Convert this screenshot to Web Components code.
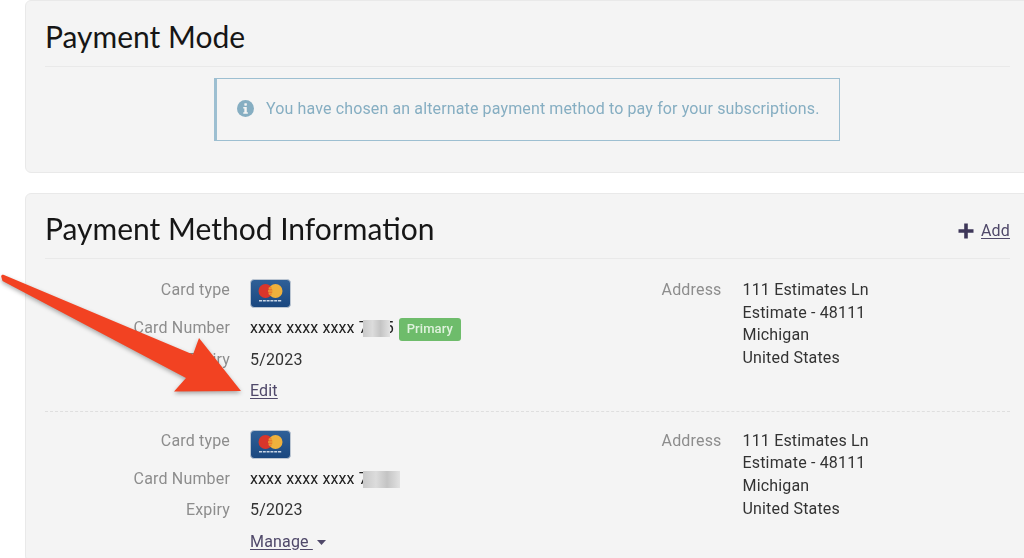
<!DOCTYPE html>
<html lang="en"><head><meta charset="utf-8"><title>Payment</title>
<style>
html,body{margin:0;height:558px;overflow:hidden;background:#fff}
body{font:16px/22.7px Roboto,"Liberation Sans",sans-serif;color:#333;letter-spacing:.17px}
#page{position:relative;width:1024px;height:558px;overflow:hidden;filter:blur(.35px)}
#stack{display:flex;flex-direction:column;gap:20px;width:1005px;margin-left:25px}
#p1{--pad-top:13px}
#p2{--pad-top:12px}
</style></head><body>
<template id="t-panel"><style>
:host{display:block;background:#f4f4f4;border:1px solid #e9e9e9;border-radius:6px;padding:var(--pad-top,13px) 19px 0 19px}
header{display:flex;justify-content:space-between;align-items:flex-start;height:52px;border-bottom:1px solid #e9e9e9}
h2{margin:0;font:400 30px/44px Lato,"Liberation Sans",sans-serif;color:#161616;letter-spacing:0}
</style><header><h2><slot name="title"></slot></h2><slot name="action"></slot></header><slot></slot></template>
<template id="t-alert"><style>
:host{display:flex;align-items:center;box-sizing:border-box;width:626px;height:63px;margin:11px 0 31px 169px;border:1px solid #9dbfd1;border-left-width:3px;padding:0 0 0 20px;gap:12px;color:#86aec2;letter-spacing:.13px;white-space:nowrap}
svg{width:17px;height:17px;flex:none;margin-top:-3px}
span{margin-top:-1px}
</style><svg viewBox="0 0 16 16" aria-hidden="true"><circle cx="8" cy="8" r="8" fill="#86aec2"/><rect x="6.9" y="3" width="2.4" height="2.3" rx=".5" fill="#f4f4f4"/><path d="M5.9 6.6h3.3v5h1v1.3H5.9v-1.3h1v-3.7h-1z" fill="#f4f4f4"/></svg><span><slot></slot></span></template>
<template id="t-link"><style>
:host{display:inline;color:#4f4869;text-decoration:underline;text-underline-offset:2px;cursor:pointer}
</style><slot></slot></template>
<template id="t-add"><style>
:host{display:flex;align-items:center;gap:7px;margin-top:14px}
svg{width:16px;height:16px;margin-top:-1px}
</style><svg viewBox="0 0 16 16" aria-hidden="true"><path d="M6.2 .5h3.6v5.7h5.7v3.6H9.8v5.7H6.2V9.8H.5V6.2h5.7z" fill="#3e3759"/></svg><x-link><slot></slot></x-link></template>
<template id="t-field"><style>
:host{display:grid;grid-template-columns:var(--label,185px) 1fr;column-gap:var(--gap,20px);min-height:var(--h,31px);align-items:start}
.l{text-align:right;color:#8d8d8d}
.v{color:#333;display:flex;align-items:flex-start;flex-wrap:wrap}
</style><div class="l"><slot name="label"></slot></div><div class="v"><slot></slot></div></template>
<template id="t-card"><style>
:host{display:block;width:41px;height:29px}
svg{display:block;width:41px;height:29px}
</style><svg viewBox="0 0 41 29" aria-hidden="true"><defs><linearGradient id="g" x1="0" y1="0" x2="0" y2="1"><stop offset="0" stop-color="#2f6098"/><stop offset="1" stop-color="#1a477f"/></linearGradient></defs><rect x=".5" y=".5" width="40" height="28" rx="3.5" fill="url(#g)" stroke="#bcc6d2"/><circle cx="15.5" cy="12" r="7" fill="#d9362b"/><circle cx="25.5" cy="12" r="7" fill="#eeb13d"/><path d="M20.5 7.1a7 7 0 0 1 0 9.8a7 7 0 0 1 0-9.8z" fill="#e8792c"/><path d="M18.5 9.2h5M18 12h6M18.5 14.8h5" stroke="#eeb13d" stroke-width=".8"/><path d="M9 21.8h23" stroke="#c9d6e6" stroke-width="1.6" stroke-dasharray="3 .8"/></svg></template>
<template id="t-number"><style>
:host{display:inline-flex;align-items:center;color:#222;letter-spacing:.1px;white-space:nowrap}
i{display:inline-block;height:17px;background:linear-gradient(90deg,#c9c9c9,#dcdcdc 35%,#c4c4c4 65%,#e2e2e2);margin-left:-5px;position:relative;z-index:1}
b{font-weight:400;margin-left:-5px}
</style><slot></slot><i></i><b></b></template>
<template id="t-badge"><style>
:host{display:inline-block;box-sizing:border-box;height:23px;width:62px;background:#6ebc6b;color:#dff2dd;border-radius:3px;font:500 13px/22px Roboto,sans-serif;letter-spacing:.1px;text-align:center;margin:1px 0 0 5px}
</style><slot></slot></template>
<template id="t-record"><style>
:host{display:grid;grid-template-columns:1fr 1fr;padding:20px 0 8px}
:host(:not(:last-child)){border-bottom:1px dashed #dfdfdf}
:host(:last-child){padding-top:18px}
.col{min-width:0}
.right{--label:194px;--gap:21px}
</style><div class="col"><slot name="left"></slot></div><div class="col right"><slot name="right"></slot></div></template>
<template id="t-arrow"><style>
:host{position:absolute;left:0;top:270px;width:250px;height:130px;pointer-events:none}
svg{overflow:visible;display:block;filter:drop-shadow(0 2px 2px rgba(0,0,0,.32))}
</style><svg width="250" height="130" viewBox="0 270 250 130" aria-hidden="true"><path d="M1.5 277.5C.5 275.5 2 274.2 4 275L193 354.5L199 338L241 391L174 391.5L186 378L2.5 281z" fill="#f24222"/></svg></template>

<div id="page">
<div id="stack">
<x-panel id="p1"><span slot="title">Payment Mode</span>
<x-alert>You have chosen an alternate payment method to pay for your subscriptions.</x-alert></x-panel>
<x-panel id="p2"><span slot="title">Payment Method Information</span><x-add slot="action">Add</x-add>
<x-record>
<div slot="left">
<x-field style="--h:38px"><span slot="label">Card type</span><x-card></x-card></x-field>
<x-field style="--h:32px"><span slot="label">Card Number</span><x-number mask="27" tail="5">xxxx xxxx xxxx 7</x-number><x-badge>Primary</x-badge></x-field>
<x-field><span slot="label">Expiry</span>5/2023</x-field>
<x-field style="--h:22px;"><span slot="label"></span><x-link>Edit</x-link></x-field>
</div>
<div slot="right"><x-field><span slot="label">Address</span><div>111 Estimates Ln<br>Estimate - 48111<br>Michigan<br>United States</div></x-field></div>
</x-record>
<x-record>
<div slot="left">
<x-field style="--h:38px"><span slot="label">Card type</span><x-card></x-card></x-field>
<x-field style="--h:31px"><span slot="label">Card Number</span><x-number mask="37">xxxx xxxx xxxx 7</x-number></x-field>
<x-field style="--h:32px"><span slot="label">Expiry</span>5/2023</x-field>
<x-field style="--h:22px"><span slot="label"></span><span><x-link>Manage&nbsp;</x-link><svg width="9" height="5" viewBox="0 0 9 5" style="margin-left:4px;vertical-align:2px" aria-hidden="true"><path d="M0 0h9L4.5 5z" fill="#4f4869"/></svg></span></x-field>
</div>
<div slot="right"><x-field><span slot="label">Address</span><div>111 Estimates Ln<br>Estimate - 48111<br>Michigan<br>United States</div></x-field></div>
</x-record>
</x-panel>
</div>
<x-arrow></x-arrow>
</div>
<script>
const names=['panel','alert','link','add','field','card','number','badge','record','arrow'];
for(const n of names){
  customElements.define('x-'+n,class extends HTMLElement{
    constructor(){super();const r=this.attachShadow({mode:'open'});r.appendChild(document.getElementById('t-'+n).content.cloneNode(true));}
    connectedCallback(){if(n==='number'){const i=this.shadowRoot.querySelector('i');i.style.width=(this.getAttribute('mask')||32)+'px';this.shadowRoot.querySelector('b').textContent=this.getAttribute('tail')||'';}}
  });
}
</script>
</body></html>
